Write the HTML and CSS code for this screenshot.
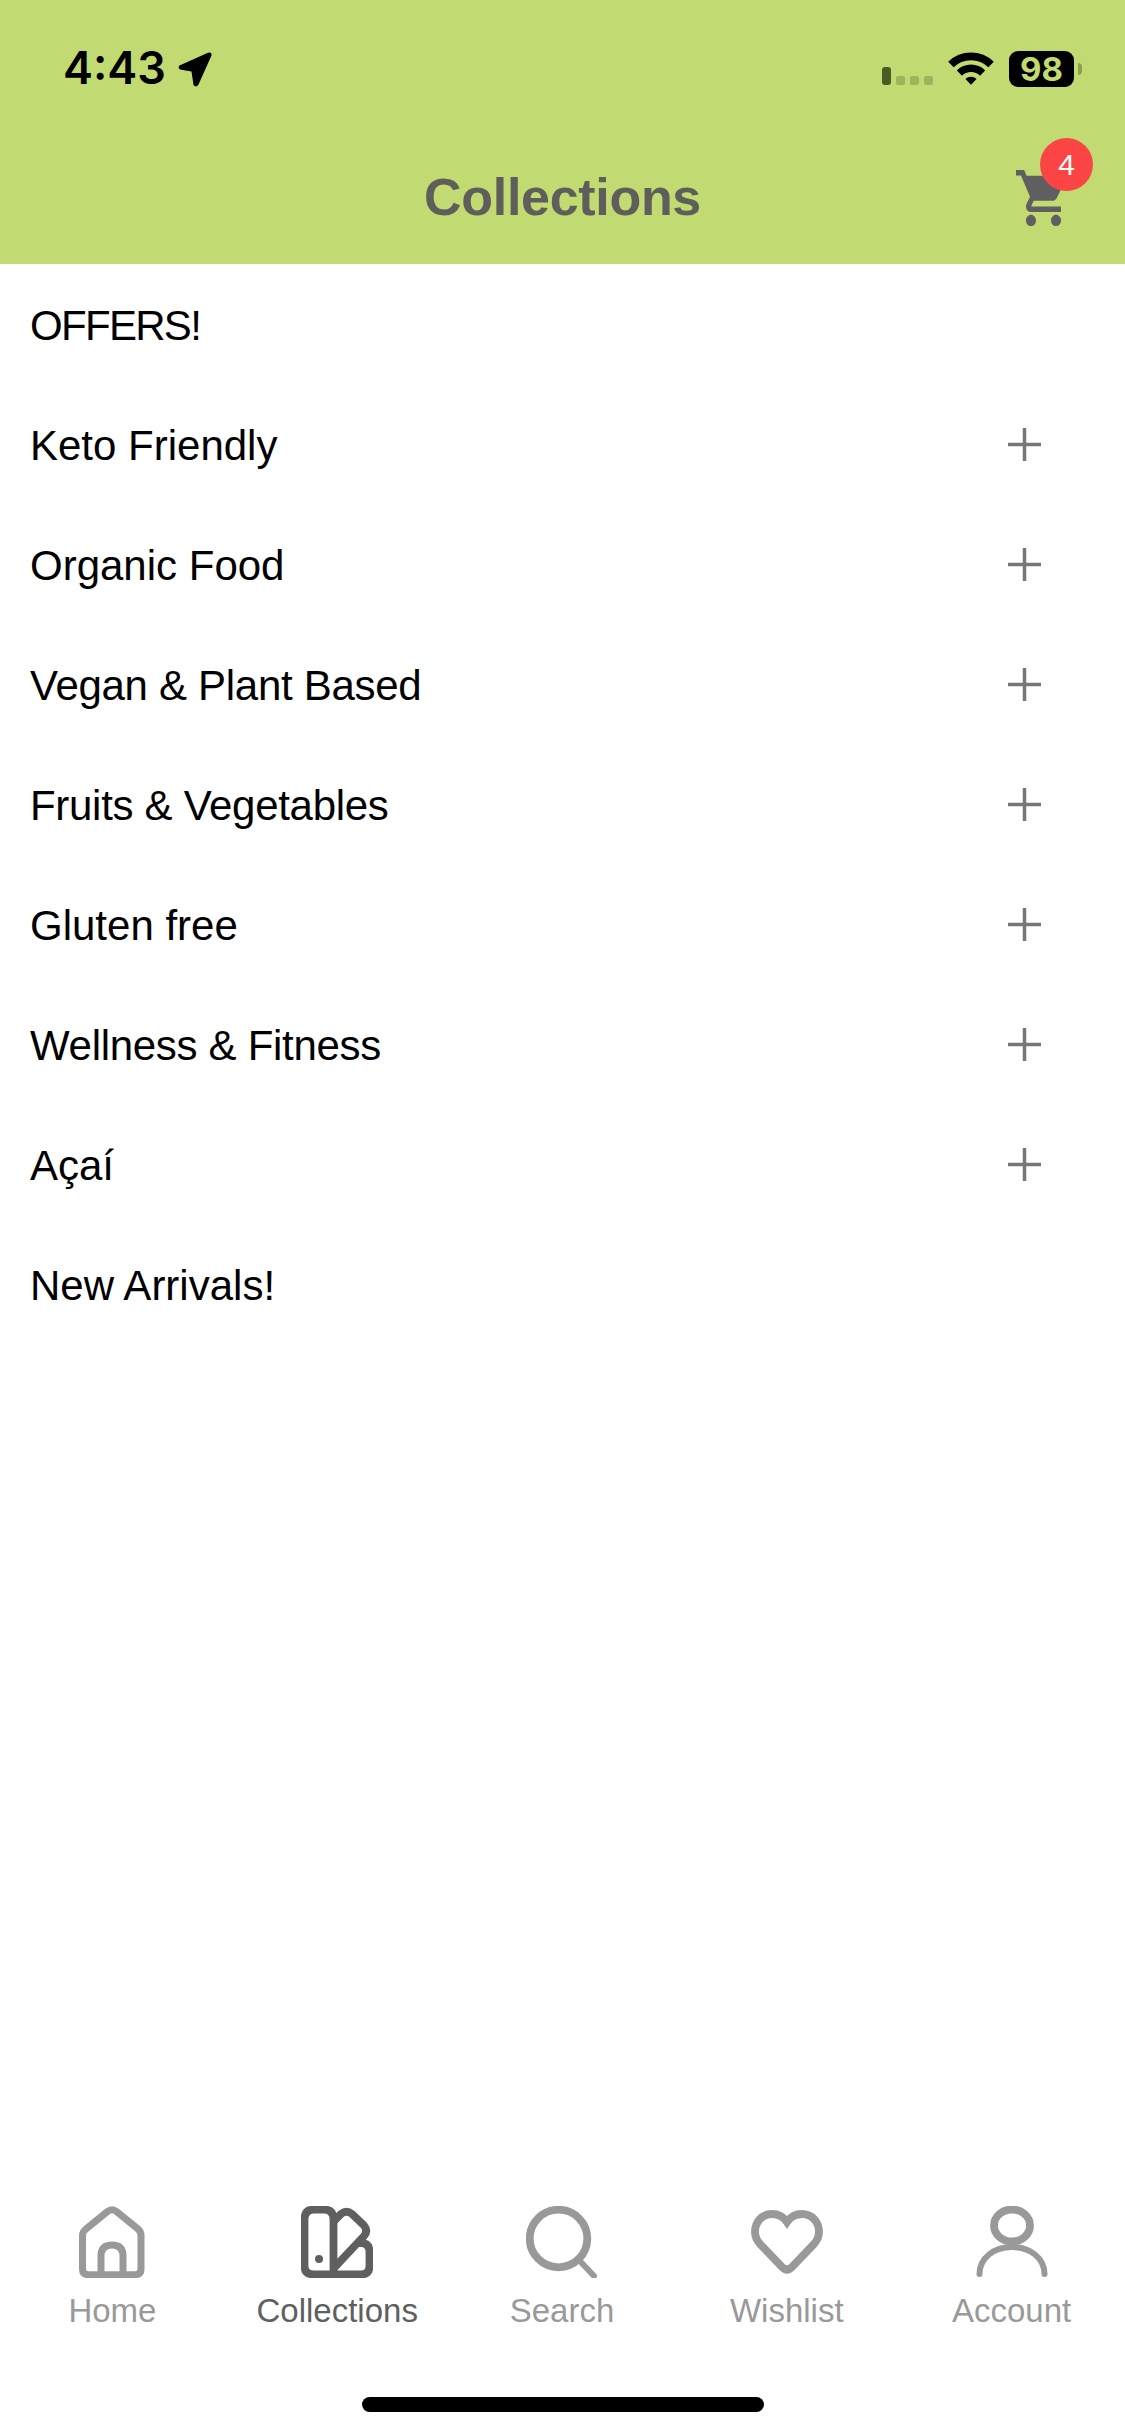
FILE: index.html

```html
<!DOCTYPE html>
<html>
<head>
    <meta charset="utf-8">
    <title>Collections</title>
    <link rel="stylesheet" href="styles.css">
</head>
<body>
<div class="page">
    <header class="header">
        <div class="status-bar">
            <div class="status-left">
                <span class="time">4:43</span>
                <svg class="location" viewBox="0 0 35 35"><path d="M2.5 13.5 L31 .8 Q35 -.5 34.5 3.5 L21.5 32.5 Q19 36 16.5 33 L14.5 19.5 L3 17.5 Q.5 15.5 2.5 13.5Z"/></svg>
            </div>
            <div class="status-right">
                <div class="signal">
                    <span class="signal-bar"></span>
                    <span class="signal-dot"></span>
                    <span class="signal-dot"></span>
                    <span class="signal-dot"></span>
                </div>
                <svg class="wifi" viewBox="-.5 0 47 33"><path d="M-.3 9.7A33 33 0 0 1 46.3 9.7L40.7 15.3A25 25 0 0 0 5.3 15.3Z"/><path d="M8.5 18.5A20.5 20.5 0 0 1 37.5 18.5L32.2 23.8A13 13 0 0 0 13.8 23.8Z"/><path d="M17.3 27.3A8 8 0 0 1 28.7 27.3L23 33Z"/></svg>
                <div class="battery">
                    <span class="battery-body">98</span>
                    <span class="battery-cap"></span>
                </div>
            </div>
        </div>
        <div class="nav">
            <h1 class="nav-title">Collections</h1>
            <div class="cart">
                <svg class="cart-icon" viewBox="1 2 20 20" preserveAspectRatio="none"><path d="M7 18c-1.1 0-1.99.9-1.99 2S5.9 22 7 22s2-.9 2-2-.9-2-2-2zM1 2v2h2l3.6 7.59-1.35 2.45c-.16.28-.25.61-.25.96 0 1.1.9 2 2 2h12v-2H7.42c-.14 0-.25-.11-.25-.25l.03-.12.9-1.63h7.45c.75 0 1.41-.41 1.75-1.03l3.58-6.47c.08-.14.12-.31.12-.48 0-.55-.45-1-1-1H5.21l-.94-2H1zm16 16c-1.1 0-1.99.9-1.99 2s.89 2 1.99 2 2-.9 2-2-.9-2-2-2z"/></svg>
                <span class="cart-badge">4</span>
            </div>
        </div>
    </header>

    <main class="list">
        <div class="row row-caps"><span>OFFERS!</span></div>
        <div class="row"><span>Keto Friendly</span><svg class="plus" viewBox="0 0 33 33"><path d="M0 16.5H33M16.5 0V33"/></svg></div>
        <div class="row"><span>Organic Food</span><svg class="plus" viewBox="0 0 33 33"><path d="M0 16.5H33M16.5 0V33"/></svg></div>
        <div class="row row-amp"><span>Vegan &amp; Plant Based</span><svg class="plus" viewBox="0 0 33 33"><path d="M0 16.5H33M16.5 0V33"/></svg></div>
        <div class="row row-amp"><span>Fruits &amp; Vegetables</span><svg class="plus" viewBox="0 0 33 33"><path d="M0 16.5H33M16.5 0V33"/></svg></div>
        <div class="row"><span>Gluten free</span><svg class="plus" viewBox="0 0 33 33"><path d="M0 16.5H33M16.5 0V33"/></svg></div>
        <div class="row row-amp"><span>Wellness &amp; Fitness</span><svg class="plus" viewBox="0 0 33 33"><path d="M0 16.5H33M16.5 0V33"/></svg></div>
        <div class="row"><span>Açaí</span><svg class="plus" viewBox="0 0 33 33"><path d="M0 16.5H33M16.5 0V33"/></svg></div>
        <div class="row"><span>New Arrivals!</span></div>
    </main>

    <footer class="tabbar">
        <nav class="tabs">
            <div class="tab">
                <svg class="tab-icon" viewBox="0 0 72 72"><path d="M31.5 5.5 L10 23 Q6.5 25.5 6.5 29.5 V63 Q6.5 68.7 12.5 68.7 H59 Q65 68.7 65 63 V29.5 Q65 25.5 62 23 L40.5 5.5 Q36 2 31.5 5.5Z"/><path d="M25 69 V50 Q25 39 36 39 Q47 39 47 50 V69"/></svg>
                <span class="tab-label">Home</span>
            </div>
            <div class="tab active">
                <svg class="tab-icon icon-heavy" viewBox="0 0 72 72"><path d="M3.5 13 Q3.5 3.5 13 3.5 H23 Q32.5 3.5 32.5 13 V68.5 H13 Q3.5 68.5 3.5 60Z"/><path d="M33 15 L40 8 Q45.5 3.5 51 8 L63 19.5 Q67.5 25 63 30 L33 62"/><path d="M58 37 H60 Q68.5 37 68.5 46 V60 Q68.5 68.5 60 68.5 H33"/><circle class="dot" cx="18" cy="53" r="4"/></svg>
                <span class="tab-label">Collections</span>
            </div>
            <div class="tab">
                <svg class="tab-icon icon-heavy" viewBox="0 0 72 72"><circle cx="32.5" cy="32.5" r="28.8"/><path class="thin" d="M53 54 L68 70"/></svg>
                <span class="tab-label">Search</span>
            </div>
            <div class="tab">
                <svg class="tab-icon icon-heavy" viewBox="0 0 72 72"><path d="M36 16 C32 10 27 8 21 8 C11 8 4 16 4 26 C4 31 5.5 34 9 38 L31 61 Q36 66 41 61 L63 38 C66.5 34 68 31 68 26 C68 16 61 8 51 8 C45 8 40 10 36 16Z"/></svg>
                <span class="tab-label">Wishlist</span>
            </div>
            <div class="tab">
                <svg class="tab-icon icon-heavy" viewBox="0 0 72 72"><ellipse cx="36" cy="19.5" rx="18" ry="16"/><path class="thin" d="M3.5 68 C3.5 52 18 41 36 41 C54 41 68.5 52 68.5 68"/></svg>
                <span class="tab-label">Account</span>
            </div>
        </nav>
        <div class="home-indicator"></div>
    </footer>
</div>
</body>
</html>
```

FILE: styles.css

```css
body {
    margin: 0;
    background: #fff;
    font-family: "Liberation Sans", Arial, sans-serif;
    color: #000;
}
.page {
    display: flex;
    flex-direction: column;
    height: 2436px;
    overflow: hidden;
}
.header {
    background: #c1db72;
    height: 264px;
    flex: none;
}
.status-bar {
    height: 132px;
    display: flex;
    justify-content: space-between;
    align-items: flex-start;
    padding: 0 43px 0 63px;
    box-sizing: border-box;
}
.status-left {
    display: flex;
    align-items: flex-start;
    gap: 11px;
    padding-top: 50px;
}
.time {
    font-family: Inter, "Liberation Sans", sans-serif;
    font-weight: 600;
    font-size: 45px;
    line-height: 35px;
}
.location {
    width: 35px;
    height: 35px;
    margin-top: 2px;
}
.status-right {
    display: flex;
    align-items: flex-start;
    padding-top: 51px;
}
.signal {
    display: flex;
    align-items: flex-end;
    gap: 5px;
    height: 34px;
    margin-right: 15px;
}
.signal-bar {
    width: 9px;
    height: 18px;
    border-radius: 3px;
    background: #4c5a24;
}
.signal-dot {
    width: 9px;
    height: 9px;
    border-radius: 2px;
    background: #9db35c;
}
.wifi {
    width: 46px;
    height: 33px;
    margin-right: 15px;
    margin-top: 1px;
}
.battery {
    display: flex;
    align-items: center;
}
.battery-body {
    width: 65px;
    height: 36px;
    border-radius: 9px;
    background: #000;
    color: #c1db72;
    font-family: Inter, "Liberation Sans", sans-serif;
    font-weight: 700;
    font-size: 33px;
    line-height: 36px;
    text-align: center;
}
.battery-cap {
    width: 4px;
    height: 12px;
    margin-left: 4px;
    border-radius: 0 6px 6px 0;
    background: #8c9f4f;
}
.nav {
    height: 132px;
    display: flex;
    justify-content: center;
    align-items: center;
    position: relative;
}
.nav-title {
    margin: 0 0 3px;
    font-size: 52px;
    font-weight: 700;
    letter-spacing: -0.3px;
    color: #5e5f5a;
}
.cart {
    position: absolute;
    right: 59px;
    top: 38px;
    width: 50px;
    height: 56px;
}
.cart-icon {
    display: block;
    width: 50px;
    height: 56px;
    fill: #5f5f5f;
}
.cart-badge {
    position: absolute;
    left: 24px;
    top: -32px;
    width: 53px;
    height: 53px;
    border-radius: 50%;
    background: #fb4444;
    color: #fff;
    font-size: 30px;
    line-height: 53px;
    text-align: center;
}
.list {
    flex: 1;
}
.row {
    height: 120px;
    display: flex;
    justify-content: space-between;
    align-items: center;
    padding: 0 84px 0 30px;
    font-size: 42px;
}
.row span {
    margin-top: 3px;
}
.row-caps {
    letter-spacing: -1.7px;
}
.row-amp {
    letter-spacing: -0.3px;
}
.plus {
    width: 33px;
    height: 33px;
    fill: none;
    stroke: #777;
    stroke-width: 3.5;
}
.tabbar {
    flex: none;
    height: 230px;
    display: flex;
    flex-direction: column;
    align-items: center;
}
.tabs {
    display: flex;
    width: 100%;
    padding-right: 1px;
    box-sizing: border-box;
}
.tab {
    flex: 1;
    display: flex;
    flex-direction: column;
    align-items: center;
    color: #999;
}
.tab.active {
    color: #5f5f5f;
}
.tab-icon {
    width: 72px;
    height: 72px;
    fill: none;
    stroke: currentColor;
    stroke-width: 7;
}
.icon-heavy {
    stroke-width: 7.8;
}
.tab-icon .dot {
    fill: currentColor;
    stroke: none;
}
.tab-icon .thin {
    stroke-width: 6;
    stroke-linecap: round;
}
.tab-label {
    margin-top: 13px;
    font-size: 33px;
    line-height: 40px;
}
.home-indicator {
    margin-top: auto;
    margin-bottom: 24px;
    width: 402px;
    height: 15px;
    border-radius: 8px;
    background: #000;
}
```
